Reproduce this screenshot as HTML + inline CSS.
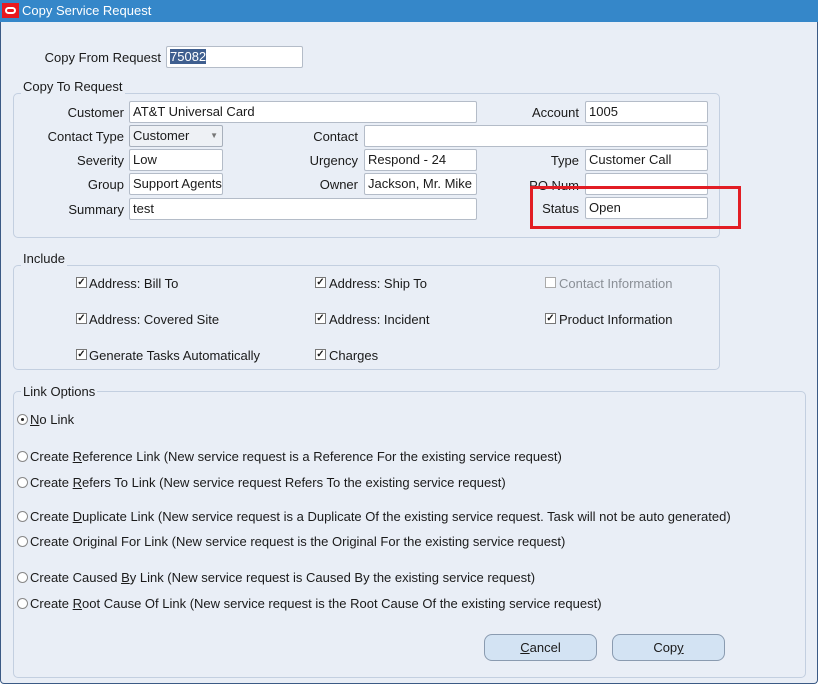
<!DOCTYPE html>
<html><head><style>
*{box-sizing:border-box;margin:0;padding:0}
body{width:818px;height:684px;overflow:hidden;background:#fff;font-family:"Liberation Sans",sans-serif;font-size:13px;color:#1a1a1a;position:relative}
.win{position:absolute;left:0;top:0;width:818px;height:684px;background:#e9eef6;border:1px solid #3b5a85;border-top:none;border-radius:0 0 4px 4px}
.title{position:absolute;left:0;top:0;width:818px;height:22px;background:#3587c9;color:#fff;font-size:13px;line-height:22px;padding-left:22px}
.logo{position:absolute;left:2px;top:3px;width:17px;height:15px;background:#e8191f}
.logo:after{content:"";position:absolute;left:3px;top:4px;width:11px;height:7px;border:2px solid #fff;border-radius:4px;box-sizing:border-box}
.a{position:absolute;white-space:nowrap}
.lbl{position:absolute;text-align:right;white-space:nowrap;line-height:22px}
.in{position:absolute;height:22px;background:#fff;border:1px solid #b4bcc8;border-radius:2px;line-height:20px;padding-left:3px}
.grp{position:absolute;border:1px solid #c3cfe0;border-radius:5px}
.leg{position:absolute;background:#e9eef6;padding:0 2px;line-height:14px}
.cb{position:absolute;width:11px;height:11px;border:1px solid #777;background:#fff;font-size:10px;line-height:9px;text-align:center;font-weight:bold}
.rd{position:absolute;width:11px;height:11px;border:1px solid #888;border-radius:50%;background:#fff}
.btn{position:absolute;height:27px;background:#d3e3f3;border:1px solid #8a9bb0;border-radius:8px;text-align:center;line-height:25px}
</style></head><body>
<div class="win"></div>
<div class="title"><div class="logo"></div>Copy Service Request</div>

<div class="lbl" style="left:0;width:161px;top:47px">Copy From Request</div>
<div class="in" style="left:166px;top:46px;width:137px"><span style="background:#3f5f8f;color:#fff">75082</span></div>

<div class="grp" style="left:13px;top:93px;width:707px;height:145px"></div>
<div class="leg a" style="left:21px;top:80px">Copy To Request</div>
<div class="lbl" style="left:0;width:124px;top:102px">Customer</div>
<div class="in" style="left:129px;top:101px;width:348px">AT&amp;T Universal Card</div>
<div class="lbl" style="left:480px;width:99px;top:102px">Account</div>
<div class="in" style="left:585px;top:101px;width:123px">1005</div>

<div class="lbl" style="left:0;width:124px;top:126px">Contact Type</div>
<div class="in" style="left:129px;top:125px;width:94px;background:#eef1f5;border-color:#a8b0bc">Customer<span style="position:absolute;right:4px;top:0;font-size:8px;color:#777">▼</span></div>
<div class="lbl" style="left:250px;width:108px;top:126px">Contact</div>
<div class="in" style="left:364px;top:125px;width:344px"></div>

<div class="lbl" style="left:0;width:124px;top:150px">Severity</div>
<div class="in" style="left:129px;top:149px;width:94px">Low</div>
<div class="lbl" style="left:250px;width:108px;top:150px">Urgency</div>
<div class="in" style="left:364px;top:149px;width:113px">Respond - 24</div>
<div class="lbl" style="left:480px;width:99px;top:150px">Type</div>
<div class="in" style="left:585px;top:149px;width:123px">Customer Call</div>

<div class="lbl" style="left:0;width:124px;top:174px">Group</div>
<div class="in" style="left:129px;top:173px;width:94px;overflow:hidden">Support Agents</div>
<div class="lbl" style="left:250px;width:108px;top:174px">Owner</div>
<div class="in" style="left:364px;top:173px;width:113px;overflow:hidden">Jackson, Mr. Mike</div>
<div class="lbl" style="left:480px;width:99px;top:175px">PO Num</div>
<div class="in" style="left:585px;top:173px;width:123px"></div>

<div class="lbl" style="left:0;width:124px;top:199px">Summary</div>
<div class="in" style="left:129px;top:198px;width:348px">test</div>
<div class="lbl" style="left:480px;width:99px;top:198px">Status</div>
<div class="in" style="left:585px;top:197px;width:123px">Open</div>
<div style="position:absolute;left:530px;top:186px;width:211px;height:43px;border:3px solid #e21d24;z-index:2"></div>

<div class="grp" style="left:13px;top:265px;width:707px;height:105px"></div>
<div class="leg a" style="left:21px;top:252px">Include</div>
<div class="cb" style="left:76px;top:277px">✓</div><div class="a" style="left:89px;top:276px">Address: Bill To</div>
<div class="cb" style="left:315px;top:277px">✓</div><div class="a" style="left:329px;top:276px">Address: Ship To</div>
<div class="cb" style="left:545px;top:277px;border-color:#aaa"></div><div class="a" style="left:559px;top:276px;color:#8a8f96">Contact Information</div>
<div class="cb" style="left:76px;top:313px">✓</div><div class="a" style="left:89px;top:312px">Address: Covered Site</div>
<div class="cb" style="left:315px;top:313px">✓</div><div class="a" style="left:329px;top:312px">Address: Incident</div>
<div class="cb" style="left:545px;top:313px">✓</div><div class="a" style="left:559px;top:312px">Product Information</div>
<div class="cb" style="left:76px;top:349px">✓</div><div class="a" style="left:89px;top:348px">Generate Tasks Automatically</div>
<div class="cb" style="left:315px;top:349px">✓</div><div class="a" style="left:329px;top:348px">Charges</div>

<div class="grp" style="left:13px;top:391px;width:793px;height:287px"></div>
<div class="leg a" style="left:21px;top:385px">Link Options</div>
<div class="rd" style="left:17px;top:414px"><div style="position:absolute;left:3px;top:3px;width:3px;height:3px;background:#222;border-radius:50%"></div></div><div class="a" style="left:30px;top:412px"><u>N</u>o Link</div>
<div class="rd" style="left:17px;top:451px"></div><div class="a" style="left:30px;top:449px">Create <u>R</u>eference Link (New service request is a Reference For the existing service request)</div>
<div class="rd" style="left:17px;top:477px"></div><div class="a" style="left:30px;top:475px">Create <u>R</u>efers To Link (New service request Refers To the existing service request)</div>
<div class="rd" style="left:17px;top:511px"></div><div class="a" style="left:30px;top:509px">Create <u>D</u>uplicate Link (New service request is a Duplicate Of the existing service request. Task will not be auto generated)</div>
<div class="rd" style="left:17px;top:536px"></div><div class="a" style="left:30px;top:534px">Create Original For Link (New service request is the Original For the existing service request)</div>
<div class="rd" style="left:17px;top:572px"></div><div class="a" style="left:30px;top:570px">Create Caused <u>B</u>y Link (New service request is Caused By the existing service request)</div>
<div class="rd" style="left:17px;top:598px"></div><div class="a" style="left:30px;top:596px">Create <u>R</u>oot Cause Of Link (New service request is the Root Cause Of the existing service request)</div>

<div class="btn" style="left:484px;top:634px;width:113px"><u>C</u>ancel</div>
<div class="btn" style="left:612px;top:634px;width:113px">Cop<u>y</u></div>
</body></html>
